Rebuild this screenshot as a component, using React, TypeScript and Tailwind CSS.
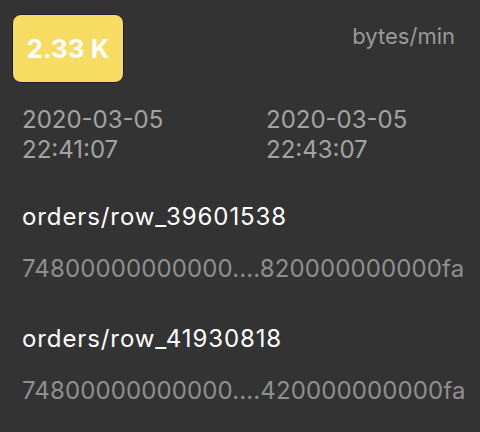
import React from "react";

const rows = [
  { key: "orders/row_39601538", val: "74800000000000....820000000000fa" },
  { key: "orders/row_41930818", val: "74800000000000....420000000000fa" },
];

export default function App() {
  return (
    <div
      className="w-[480px] h-[432px] bg-[#333333] overflow-hidden pt-[14px]"
      style={{ fontFamily: "Inter, 'Noto Sans', sans-serif" }}
    >
      <div className="flex items-start justify-between pl-[12px] pr-[25px]">
        <div className="w-[112px] h-[69px] rounded-[9px] bg-[#f7dc64] border border-[#1c1c3a] flex items-center justify-center">
          <span className="text-white font-bold text-[26px] leading-none">2.33 K</span>
        </div>
        <span className="mt-[8px] text-[#9a9a9a] text-[22px] leading-[28px]">bytes/min</span>
      </div>
      <div className="flex mt-[22px] pl-[22px] text-[#a3a3a3] text-[24px] leading-[30px]">
        <div className="w-[244px] flex flex-col">
          <span>2020-03-05</span>
          <span>22:41:07</span>
        </div>
        <div className="flex flex-col">
          <span>2020-03-05</span>
          <span>22:43:07</span>
        </div>
      </div>
      <div className="flex flex-col pl-[22px] mt-[37px] gap-[40px]">
        {rows.map((r) => (
          <div key={r.key} className="flex flex-col gap-[22px]">
            <span className="text-white text-[24px] leading-[30px] tracking-[0.9px]">{r.key}</span>
            <span className="text-[#8f8f8f] text-[24px] leading-[30px] tracking-[0.12px] whitespace-nowrap">{r.val}</span>
          </div>
        ))}
      </div>
    </div>
  );
}
